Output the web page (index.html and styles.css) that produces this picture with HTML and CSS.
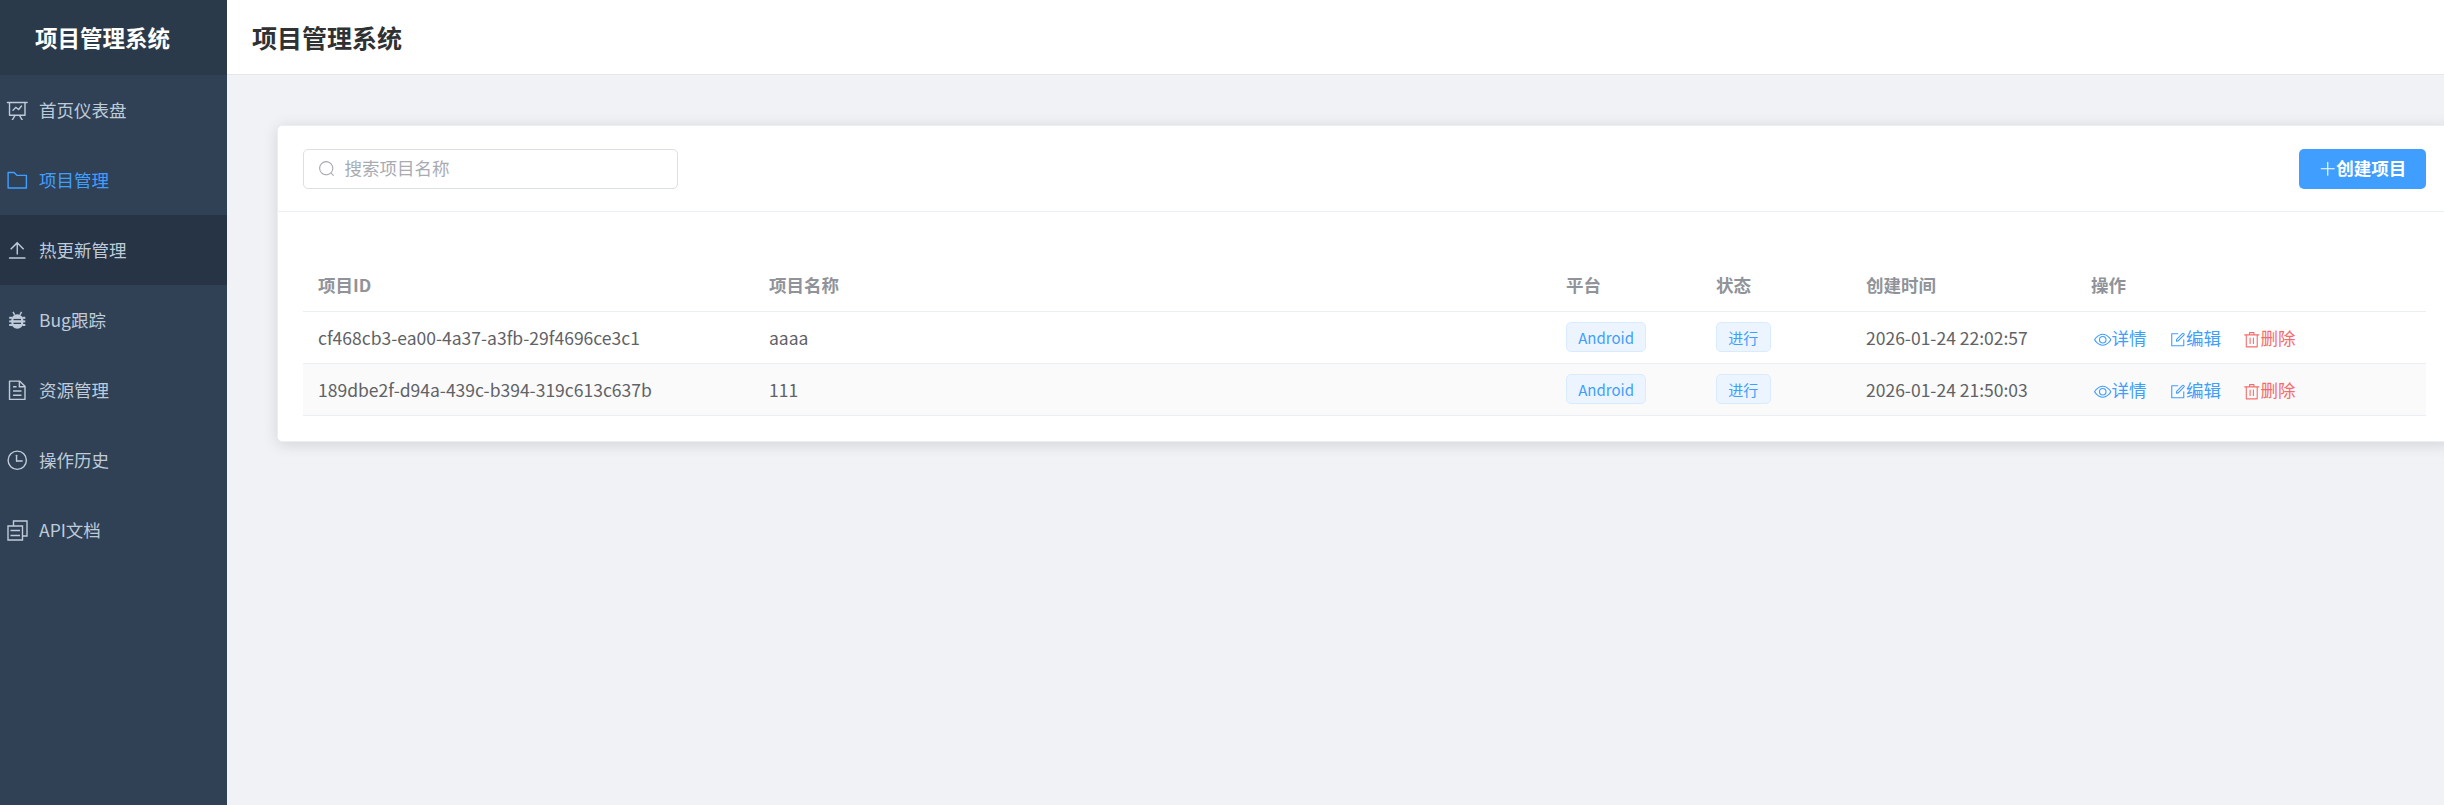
FILE: index.html
```html
<!DOCTYPE html>
<html lang="zh-CN">
<head>
<meta charset="utf-8">
<title>项目管理系统</title>
<link rel="stylesheet" href="styles.css">
</head>
<body>
<div class="app">
  <aside class="sidebar">
    <div class="logo">项目管理系统</div>
    <nav class="menu">
      <a class="menu-item"><svg class="menu-icon" viewBox="0 0 1024 1024"><path d="M359.168 768H160a32 32 0 0 1-32-32V192H64a32 32 0 0 1 0-64h896a32 32 0 1 1 0 64h-64v544a32 32 0 0 1-32 32H665.216l110.848 192h-73.856L591.36 768H433.024L322.176 960H248.32l110.848-192zM832 192H192v512h640V192zM342.656 534.656a32 32 0 1 1-45.312-45.312L444.992 341.76l125.44 94.08L679.04 300.032a32 32 0 1 1 49.92 39.936L581.632 524.224 451.008 426.304 342.656 534.592z"/></svg><span>首页仪表盘</span></a>
      <a class="menu-item is-active"><svg class="menu-icon" viewBox="0 0 1024 1024"><path d="M128 192v640h768V320H485.76L357.504 192H128zm-32-64h287.872l128.384 128H928a32 32 0 0 1 32 32v576a32 32 0 0 1-32 32H96a32 32 0 0 1-32-32V160a32 32 0 0 1 32-32z"/></svg><span>项目管理</span></a>
      <a class="menu-item is-hover"><svg class="menu-icon" viewBox="0 0 1024 1024"><path d="M160 832h704a32 32 0 1 1 0 64H160a32 32 0 1 1 0-64zm384-578.304V704h-64V247.296L237.248 490.048 192 444.8 508.8 128l316.8 316.8-45.312 45.248L544 253.696z"/></svg><span>热更新管理</span></a>
      <a class="menu-item"><svg class="menu-icon" viewBox="0 0 22.5 22.5"><rect x="5.300" y="5.200" width="12" height="14.600" rx="6"/><rect x="3.200" y="7.800" width="3" height="2"/><rect x="16.300" y="7.800" width="3" height="2"/><rect x="3.200" y="11.400" width="3" height="2"/><rect x="16.300" y="11.400" width="3" height="2"/><rect x="3.200" y="15" width="3" height="2"/><rect x="16.300" y="15" width="3" height="2"/><path class="bug-antenna" d="M7 2.800l1.700 3M15.600 2.800l-1.700 3"/><rect class="bug-stripe" x="7.500" y="9.900" width="7.500" height="1.300"/><rect class="bug-stripe" x="7.500" y="13.700" width="7.500" height="1.300"/></svg><span>Bug跟踪</span></a>
      <a class="menu-item"><svg class="menu-icon" viewBox="0 0 1024 1024"><path d="M832 384H576V128H192v768h640V384zm-26.496-64L640 154.496V320h165.504zM160 64h480l256 256v608a32 32 0 0 1-32 32H160a32 32 0 0 1-32-32V96a32 32 0 0 1 32-32zm160 448h384v64H320v-64zm0-192h160v64H320v-64zm0 384h384v64H320v-64z"/></svg><span>资源管理</span></a>
      <a class="menu-item"><svg class="menu-icon" viewBox="0 0 1024 1024"><path d="M512 896a384 384 0 1 0 0-768 384 384 0 0 0 0 768zm0 64a448 448 0 1 1 0-896 448 448 0 0 1 0 896z"/><path d="M480 256a32 32 0 0 1 32 32v256a32 32 0 0 1-64 0V288a32 32 0 0 1 32-32z"/><path d="M480 512h256q32 0 32 32t-32 32H480q-32 0-32-32t32-32z"/></svg><span>操作历史</span></a>
      <a class="menu-item"><svg class="menu-icon menu-icon-line" viewBox="0 0 22.5 22.500"><path d="M2 7h14.500v14H2zM7.500 7V2h13.500v15h-4.500M4.500 11.500h9.500M4.500 16.500h9.500"/></svg><span>API文档</span></a>
    </nav>
  </aside>
  <div class="main">
    <header class="topbar"><h1 class="page-title">项目管理系统</h1></header>
    <main class="content">
      <section class="card">
        <div class="card-head">
          <div class="search">
            <svg class="search-icon" viewBox="0 0 1024 1024"><path d="m795.904 750.72 124.992 124.928a32 32 0 0 1-45.248 45.248L750.656 795.904a416 416 0 1 1 45.248-45.248zM480 832a352 352 0 1 0 0-704 352 352 0 0 0 0 704z"/></svg>
            <span class="search-text">搜索项目名称</span>
          </div>
          <button class="primary-btn"><svg class="btn-icon" viewBox="0 0 1024 1024"><path d="M480 480V128a32 32 0 0 1 64 0v352h352a32 32 0 1 1 0 64H544v352a32 32 0 1 1-64 0V544H128a32 32 0 0 1 0-64h352z"/></svg><span>创建项目</span></button>
        </div>
        <div class="card-body">
          <table class="table">
            <colgroup><col class="c-id"><col class="c-name"><col class="c-plat"><col class="c-state"><col class="c-time"><col class="c-ops"></colgroup>
            <thead><tr><th>项目ID</th><th>项目名称</th><th>平台</th><th>状态</th><th>创建时间</th><th>操作</th></tr></thead>
            <tbody>
              <tr>
                <td>cf468cb3-ea00-4a37-a3fb-29f4696ce3c1</td><td>aaaa</td>
                <td><span class="tag">Android</span></td><td><span class="tag">进行</span></td>
                <td>2026-01-24 22:02:57</td>
                <td><div class="ops">
                  <a class="op op-blue"><svg class="op-icon" viewBox="0 0 1024 1024"><path d="M512 160c320 0 512 352 512 352S832 864 512 864 0 512 0 512s192-352 512-352zm0 64c-225.280 0-384.128 208.064-436.800 288 52.608 79.872 211.456 288 436.800 288 225.280 0 384.128-208.064 436.800-288-52.608-79.872-211.456-288-436.800-288zm0 64a224 224 0 1 1 0 448 224 224 0 0 1 0-448zm0 64a160.192 160.192 0 0 0-160 160c0 88.192 71.744 160 160 160s160-71.808 160-160-71.744-160-160-160z"/></svg>详情</a>
                  <a class="op op-blue"><svg class="op-icon" viewBox="0 0 1024 1024"><path d="M832 512a32 32 0 1 1 64 0v352a32 32 0 0 1-32 32H160a32 32 0 0 1-32-32V160a32 32 0 0 1 32-32h352a32 32 0 0 1 0 64H192v640h640V512z"/><path d="m469.952 554.240 52.800-7.552L847.104 222.400a32 32 0 1 0-45.248-45.248L477.440 501.440l-7.552 52.800zm422.400-422.400a96 96 0 0 1 0 135.808l-331.840 331.840a32 32 0 0 1-18.112 9.088L436.800 623.680a32 32 0 0 1-36.224-36.224l15.104-105.600a32 32 0 0 1 9.024-18.112l331.904-331.840a96 96 0 0 1 135.744 0z"/></svg>编辑</a>
                  <a class="op op-red"><svg class="op-icon" viewBox="0 0 1024 1024"><path d="M160 256H96a32 32 0 0 1 0-64h256V95.936a32 32 0 0 1 32-32h256a32 32 0 0 1 32 32V192h256a32 32 0 1 1 0 64h-64v672a32 32 0 0 1-32 32H192a32 32 0 0 1-32-32V256zm448-64v-64H416v64h192zM224 896h576V256H224v640zm192-128a32 32 0 0 1-32-32V416a32 32 0 0 1 64 0v320a32 32 0 0 1-32 32zm192 0a32 32 0 0 1-32-32V416a32 32 0 0 1 64 0v320a32 32 0 0 1-32 32z"/></svg>删除</a>
                </div></td>
              </tr>
              <tr class="striped">
                <td>189dbe2f-d94a-439c-b394-319c613c637b</td><td>111</td>
                <td><span class="tag">Android</span></td><td><span class="tag">进行</span></td>
                <td>2026-01-24 21:50:03</td>
                <td><div class="ops">
                  <a class="op op-blue"><svg class="op-icon" viewBox="0 0 1024 1024"><path d="M512 160c320 0 512 352 512 352S832 864 512 864 0 512 0 512s192-352 512-352zm0 64c-225.280 0-384.128 208.064-436.800 288 52.608 79.872 211.456 288 436.800 288 225.280 0 384.128-208.064 436.800-288-52.608-79.872-211.456-288-436.800-288zm0 64a224 224 0 1 1 0 448 224 224 0 0 1 0-448zm0 64a160.192 160.192 0 0 0-160 160c0 88.192 71.744 160 160 160s160-71.808 160-160-71.744-160-160-160z"/></svg>详情</a>
                  <a class="op op-blue"><svg class="op-icon" viewBox="0 0 1024 1024"><path d="M832 512a32 32 0 1 1 64 0v352a32 32 0 0 1-32 32H160a32 32 0 0 1-32-32V160a32 32 0 0 1 32-32h352a32 32 0 0 1 0 64H192v640h640V512z"/><path d="m469.952 554.240 52.800-7.552L847.104 222.400a32 32 0 1 0-45.248-45.248L477.440 501.440l-7.552 52.800zm422.400-422.400a96 96 0 0 1 0 135.808l-331.840 331.840a32 32 0 0 1-18.112 9.088L436.800 623.680a32 32 0 0 1-36.224-36.224l15.104-105.600a32 32 0 0 1 9.024-18.112l331.904-331.840a96 96 0 0 1 135.744 0z"/></svg>编辑</a>
                  <a class="op op-red"><svg class="op-icon" viewBox="0 0 1024 1024"><path d="M160 256H96a32 32 0 0 1 0-64h256V95.936a32 32 0 0 1 32-32h256a32 32 0 0 1 32 32V192h256a32 32 0 1 1 0 64h-64v672a32 32 0 0 1-32 32H192a32 32 0 0 1-32-32V256zm448-64v-64H416v64h192zM224 896h576V256H224v640zm192-128a32 32 0 0 1-32-32V416a32 32 0 0 1 64 0v320a32 32 0 0 1-32 32zm192 0a32 32 0 0 1-32-32V416a32 32 0 0 1 64 0v320a32 32 0 0 1-32 32z"/></svg>删除</a>
                </div></td>
              </tr>
            </tbody>
          </table>
        </div>
      </section>
    </main>
  </div>
</div>
</body>
</html>
```
FILE: styles.css
```css
* { box-sizing: border-box; }
html, body { margin: 0; height: 100%; overflow: hidden; }
body { font-family: "Noto Sans CJK SC", "Noto Sans", sans-serif; font-size: 17.5px; color: #606266; background: #f0f2f5; }
.app { display: flex; height: 805px; }
.sidebar { width: 227px; flex: none; background: #304156; }
.logo { height: 75px; display: flex; align-items: center; padding: 0 0 2px 35px; background: #2b3a4a; color: #fff; font-size: 22.5px; font-weight: 700; }
.menu { display: flex; flex-direction: column; }
.menu-item { height: 70px; display: flex; align-items: center; gap: 10.5px; padding-left: 6px; color: #bfcbd9; }
.menu-item span { margin-top: -2px; }
.menu-item.is-active { color: #409eff; }
.menu-item.is-hover { background: #263445; }
.menu-icon { width: 22.5px; height: 22.5px; flex: none; fill: currentColor; }
.menu-icon-line { fill: none; stroke: currentColor; stroke-width: 1.4; }
.bug-antenna { fill: none; stroke: currentColor; stroke-width: 1.4; }
.bug-stripe { fill: #304156; }
.main { flex: 1; min-width: 0; display: flex; flex-direction: column; overflow: hidden; }
.topbar { height: 75px; flex: none; display: flex; align-items: center; padding-left: 25px; background: #fff; border-bottom: 1px solid #e6e6e6; }
.page-title { margin: 0; font-size: 25px; font-weight: 700; color: #303133; }
.content { flex: 1; padding: 50px 0 0 50px; }
.card { margin-right: -8px; background: #fff; border: 1px solid #ebeef5; border-radius: 5px; box-shadow: 0 2.5px 15px rgba(0,0,0,.12); }
.card-head { height: 86px; display: flex; align-items: flex-start; justify-content: space-between; padding: 23px 25px 0; border-bottom: 1px solid #ebeef5; }
.search { width: 375px; height: 40px; display: flex; align-items: center; gap: 9px; padding: 0 14px; border: 1px solid #dcdfe6; border-radius: 5px; }
.search-icon { width: 17.5px; height: 17.5px; flex: none; fill: #a8abb2; }
.search-text { color: #a8abb2; margin-top: -4px; }
.primary-btn { width: 127px; height: 40px; display: flex; align-items: center; justify-content: center; padding: 0; border: 0; border-radius: 5px; background: #409eff; color: #fff; font: 700 17.500px "Noto Sans CJK SC", sans-serif; }
.primary-btn span { margin-top: -4px; }
.btn-icon { width: 17.5px; height: 17.5px; fill: currentColor; }
.card-body { padding: 47px 25px 25px; }
.table { width: 100%; table-layout: fixed; border-collapse: collapse; }
.c-id { width: 451px; }
.c-plat, .c-state { width: 150px; }
.c-time { width: 225px; }
.c-ops { width: 350px; }
.table th { height: 52px; padding: 0 15px; text-align: left; font-weight: 700; color: #909399; border-bottom: 1px solid #ebeef5; }
.table td { height: 52px; padding: 0 15px; border-bottom: 1px solid #ebeef5; }
.striped td { background: #fafafa; }
.tag { display: inline-flex; align-items: center; height: 30px; padding: 0 11.25px; border: 1px solid #d9ecff; border-radius: 5px; background: #ecf5ff; color: #409eff; font-size: 15px; vertical-align: middle; }
.ops { display: flex; gap: 22px; padding-left: 3px; }
.op { display: inline-flex; align-items: center; }
.op-blue { color: #409eff; }
.op-red { color: #f56c6c; }
.op-icon { width: 17.5px; height: 17.5px; flex: none; margin-top: 6px; fill: currentColor; }
```
